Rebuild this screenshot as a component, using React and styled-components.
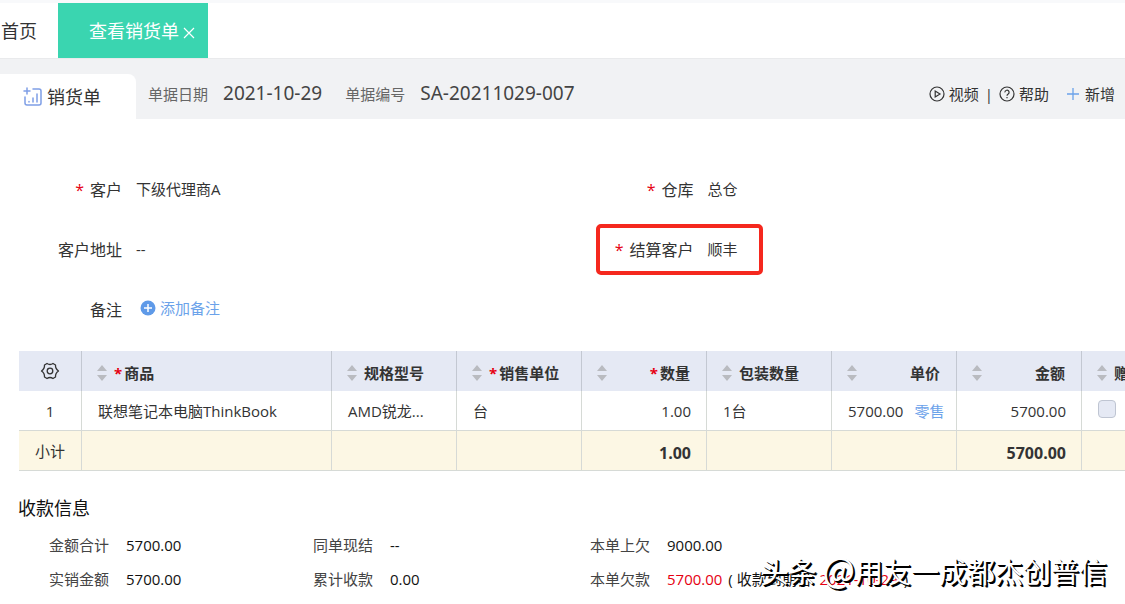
import styled, { createGlobalStyle } from 'styled-components';

const GlobalStyle = createGlobalStyle`
  * {
    box-sizing: border-box;
  }
  body {
    margin: 0;
    background: #fff;
    color: #333;
    font-family: "Open Sans", "Noto Sans CJK SC", sans-serif;
    font-size: 15px;
    line-height: 20px;
    overflow: hidden;
  }
  button {
    border: none;
    padding: 0;
    background: none;
    color: inherit;
    font: inherit;
    cursor: pointer;
  }
  a {
    color: inherit;
    text-decoration: none;
  }
`;

const Page = styled.div`
  position: relative;
  overflow: hidden;
`;

const TopBar = styled.nav`
  display: flex;
  height: 59px;
  border-top: 3px solid #f8f9fb;
  border-bottom: 1px solid #e9eaec;
  font-size: 18px;
`;

const HomeLink = styled.a`
  display: flex;
  align-items: center;
  width: 58px;
  padding-left: 1px;
`;

const ActiveTab = styled.div`
  display: flex;
  align-items: center;
  gap: 4px;
  height: 55px;
  padding: 0 13px 0 31px;
  background: #3ad5b0;
  color: #fff;
`;

const CloseButton = styled.button`
  display: flex;
  padding-top: 4px;
`;

const Header = styled.header`
  display: flex;
  align-items: center;
  height: 60px;
  background: #f1f2f4;
`;

const DocTab = styled.h1`
  display: flex;
  align-items: center;
  align-self: flex-end;
  gap: 4px;
  width: 136px;
  height: 45px;
  margin: 0;
  padding-left: 23px;
  border-top-right-radius: 8px;
  background: #fff;
  font-size: 18px;
  font-weight: 400;
`;

const Meta = styled.div`
  display: flex;
  align-items: center;
  gap: 15px;
  margin-left: 12px;
  padding-top: 8px;
  & + & {
    margin-left: 23px;
  }
`;

const MetaLabel = styled.span`
  color: #666;
  padding-top: 2px;
`;

const MetaValue = styled.span`
  color: #444;
  font-family: "Noto Sans", sans-serif;
  font-size: 19px;
`;

const Actions = styled.div`
  display: flex;
  align-items: center;
  gap: 6px;
  margin-left: auto;
  padding: 10px 10px 0 0;
`;

const Action = styled.button`
  display: flex;
  align-items: center;
  gap: ${p => (p.$spaced ? '6px' : '4px')};
  margin-left: ${p => (p.$spaced ? '12px' : '0')};
`;

const Form = styled.section`
  display: grid;
  grid-template-columns: 1fr 1fr;
  grid-auto-rows: 60px;
  column-gap: 18px;
  padding-top: 41px;
`;

const Field = styled.div`
  position: relative;
  display: grid;
  grid-template-columns: 122px 1fr;
  column-gap: 14px;
  align-items: center;
`;

const FieldLabel = styled.span`
  text-align: right;
  font-size: 16px;
`;

const FieldValue = styled.span`
  padding-bottom: 2px;
`;

const Required = styled.span`
  margin-right: ${p => p.$gap || 2}px;
  color: #e60012;
`;

const Highlight = styled.div`
  position: absolute;
  top: 4px;
  bottom: 5px;
  left: 24px;
  width: 167px;
  border: 4px solid #f5281e;
  border-radius: 5px;
`;

const AddRemark = styled.button`
  display: flex;
  align-items: center;
  gap: 4px;
  padding: 0 0 4px 4px;
  color: #6ba2ea;
`;

const TableWrap = styled.div`
  margin: 11px 0 0 19px;
  overflow: hidden;
`;

const Table = styled.table`
  width: 1188px;
  table-layout: fixed;
  border-collapse: separate;
  border-spacing: 0;
`;

const Th = styled.th`
  width: ${p => p.$width || 125}px;
  height: 40px;
  padding: 4px 16px 0 15px;
  border-right: 1px solid #c3c8d2;
  background: #e5e9f4;
  text-align: left;
  white-space: nowrap;
`;

const SettingsTh = styled(Th)`
  padding: 4px 0 0;
  text-align: center;
`;

const HeadCell = styled.div`
  display: flex;
  align-items: center;
  justify-content: ${p => (p.$right ? 'space-between' : 'flex-start')};
  gap: 7px;
`;

const Td = styled.td`
  height: 40px;
  padding: 0 15px 0 16px;
  border-right: 1px solid #d6dad6;
  border-bottom: 1px solid #d6dad6;
  text-align: ${p => p.$align || 'left'};
  white-space: nowrap;
`;

const SubtotalRow = styled.tr`
  background: #fcf7e4;
`;

const Total = styled(Td)`
  padding-top: 4px;
  font-size: 16px;
  font-weight: 700;
`;

const RowHead = styled(Td)`
  font-weight: 400;
  padding: 0;
`;

const PriceType = styled.a`
  margin-left: 11px;
  color: #6ba2ea;
`;

const PriceCell = styled(Td)`
  padding-right: 0;
`;

const GiftCheck = styled.input`
  display: block;
  appearance: none;
  width: 18px;
  height: 18px;
  margin: 0 0 4px;
  border: 1px solid #bfc5d2;
  border-radius: 4px;
  background: #e5e9f4;
`;

const Payment = styled.section`
  padding: 25px 0 8px 18px;
`;

const PaymentTitle = styled.h2`
  margin: 0 0 8px;
  color: #111;
  font-size: 18px;
  font-weight: 400;
  line-height: 24px;
`;

const PaymentGrid = styled.dl`
  display: grid;
  grid-template-columns: 264px 277px 1fr;
  grid-auto-rows: 34px;
  margin: 0;
  padding-left: 31px;
`;

const Amount = styled.div`
  display: flex;
  align-items: center;
  gap: 17px;
  white-space: nowrap;
  dt {
    color: #444;
  }
  dd {
    margin: 0;
    color: #111;
  }
`;

const Due = styled.span`
  margin-right: 2px;
  color: #e60012;
`;

const Watermark = styled.div`
  position: absolute;
  right: 18px;
  bottom: 13px;
  color: #fff;
  font-family: "Noto Sans CJK SC", sans-serif;
  font-size: 28px;
  line-height: 40px;
  text-shadow: 1px 1px 0 #000, 2px 2px 0 #000;
  white-space: nowrap;
  pointer-events: none;
`;

const At = styled.span`
  font-size: 34px;
`;

const columns = [
  { title: '商品', width: 250, required: true },
  { title: '规格型号' },
  { title: '销售单位', required: true },
  { title: '数量', required: true, right: true },
  { title: '包装数量' },
  { title: '单价', right: true },
  { title: '金额', right: true },
  { title: '赠品' }
];

const amounts = [
  { label: '金额合计', value: '5700.00' },
  { label: '同单现结', value: '--' },
  { label: '本单上欠', value: '9000.00' },
  { label: '实销金额', value: '5700.00' },
  { label: '累计收款', value: '0.00' }
];

const CloseIcon = () => (
  <svg width="12" height="12" viewBox="0 0 12 12" stroke="currentColor" strokeWidth="1.2" fill="none">
    <path d="M1 1l10 10M11 1L1 11" />
  </svg>
);

const DocIcon = () => (
  <svg width="20" height="20" viewBox="0 0 20 20" stroke="#7f9fe6" strokeWidth="1.5" fill="none" strokeLinecap="round">
    <path d="M4 1v6M1 4h6M10 2h6q2 0 2 2v12q0 2-2 2H4q-2 0-2-2v-6M6 14.500v.5M10 11v4M14 7v8" />
  </svg>
);

const PlayIcon = () => (
  <svg width="16" height="16" viewBox="0 0 16 16" stroke="#333" strokeWidth="1.2" fill="none">
    <circle cx="8" cy="8" r="7" />
    <path d="M6.200 5v6l4.800-3z" />
  </svg>
);

const HelpIcon = () => (
  <svg width="16" height="16" viewBox="0 0 16 16" stroke="#333" strokeWidth="1.2" fill="none">
    <circle cx="8" cy="8" r="7" />
    <path d="M5.900 6.400a2.100 2.100 0 1 1 3.200 1.700Q8 8.700 8 9.700M8 11v1.300" />
  </svg>
);

const PlusIcon = () => (
  <svg width="12" height="12" viewBox="0 0 12 12" stroke="#6ba2ea" strokeWidth="1.3">
    <path d="M6 0v12M0 6h12" />
  </svg>
);

const AddIcon = () => (
  <svg width="16" height="16" viewBox="0 0 16 16">
    <circle cx="8" cy="8" r="7.500" fill="#5f9ae8" />
    <path d="M8 4v8M4 8h8" stroke="#fff" strokeWidth="1.5" />
  </svg>
);

const GearIcon = () => (
  <svg width="20" height="18" viewBox="0 0 20 18" stroke="#333" strokeWidth="1.3" fill="none" strokeLinejoin="round">
    <path d="M7 1.500Q10 3.500 13 1.500L15.500 3Q15.300 6.800 18.500 9Q15.300 11.200 15.500 15L13 16.500Q10 14.500 7 16.500L4.500 15Q4.700 11.200 1.500 9Q4.700 6.800 4.500 3Z" />
    <circle cx="10" cy="9" r="2.800" />
  </svg>
);

const SortIcon = () => (
  <svg width="10" height="16" viewBox="0 0 10 16" fill="#b9bbc0">
    <path d="M5 0l5 6H0zM0 10h10l-5 6z" />
  </svg>
);

export default function App() {
  return (
    <Page>
      <GlobalStyle />
      <TopBar>
        <HomeLink href="#home">首页</HomeLink>
        <ActiveTab>
          查看销货单
          <CloseButton aria-label="关闭"><CloseIcon /></CloseButton>
        </ActiveTab>
      </TopBar>
      <Header>
        <DocTab><DocIcon />销货单</DocTab>
        <Meta>
          <MetaLabel>单据日期</MetaLabel>
          <MetaValue>2021-10-29</MetaValue>
        </Meta>
        <Meta>
          <MetaLabel>单据编号</MetaLabel>
          <MetaValue>SA-20211029-007</MetaValue>
        </Meta>
        <Actions>
          <Action><PlayIcon />视频</Action>
          <span>|</span>
          <Action><HelpIcon />帮助</Action>
          <Action $spaced><PlusIcon />新增</Action>
        </Actions>
      </Header>

      <Form>
        <Field>
          <FieldLabel><Required $gap={6}>*</Required>客户</FieldLabel>
          <FieldValue>下级代理商A</FieldValue>
        </Field>
        <Field>
          <FieldLabel><Required $gap={6}>*</Required>仓库</FieldLabel>
          <FieldValue>总仓</FieldValue>
        </Field>
        <Field>
          <FieldLabel>客户地址</FieldLabel>
          <FieldValue>--</FieldValue>
        </Field>
        <Field>
          <FieldLabel><Required $gap={6}>*</Required>结算客户</FieldLabel>
          <FieldValue>顺丰</FieldValue>
          <Highlight />
        </Field>
        <Field>
          <FieldLabel>备注</FieldLabel>
          <AddRemark><AddIcon />添加备注</AddRemark>
        </Field>
      </Form>

      <TableWrap>
        <Table>
          <thead>
            <tr>
              <SettingsTh $width={63}>
                <button aria-label="设置"><GearIcon /></button>
              </SettingsTh>
              {columns.map(c => (
                <Th key={c.title} $width={c.width}>
                  <HeadCell $right={c.right}>
                    <SortIcon />
                    <span>
                      {c.required && <Required>*</Required>}
                      {c.title}
                    </span>
                  </HeadCell>
                </Th>
              ))}
            </tr>
          </thead>
          <tbody>
            <tr>
              <RowHead $align="center">1</RowHead>
              <Td>联想笔记本电脑ThinkBook</Td>
              <Td>AMD锐龙...</Td>
              <Td>台</Td>
              <Td $align="right">1.00</Td>
              <Td>1台</Td>
              <PriceCell>5700.00<PriceType href="#retail">零售</PriceType></PriceCell>
              <Td $align="right">5700.00</Td>
              <Td><GiftCheck type="checkbox" aria-label="赠品" /></Td>
            </tr>
            <SubtotalRow>
              <RowHead $align="center">小计</RowHead>
              <Td />
              <Td />
              <Td />
              <Total $align="right">1.00</Total>
              <Td />
              <Td />
              <Total $align="right">5700.00</Total>
              <Td />
            </SubtotalRow>
          </tbody>
        </Table>
      </TableWrap>

      <Payment>
        <PaymentTitle>收款信息</PaymentTitle>
        <PaymentGrid>
          {amounts.map(a => (
            <Amount key={a.label}>
              <dt>{a.label}</dt>
              <dd>{a.value}</dd>
            </Amount>
          ))}
          <Amount>
            <dt>本单欠款</dt>
            <dd>
              <Due>5700.00</Due> ( 收款到期日: <Due>2021-10-29</Due> )
            </dd>
          </Amount>
        </PaymentGrid>
      </Payment>
      <Watermark>头条 <At>@</At>用友一成都杰创普信</Watermark>
    </Page>
  );
}
